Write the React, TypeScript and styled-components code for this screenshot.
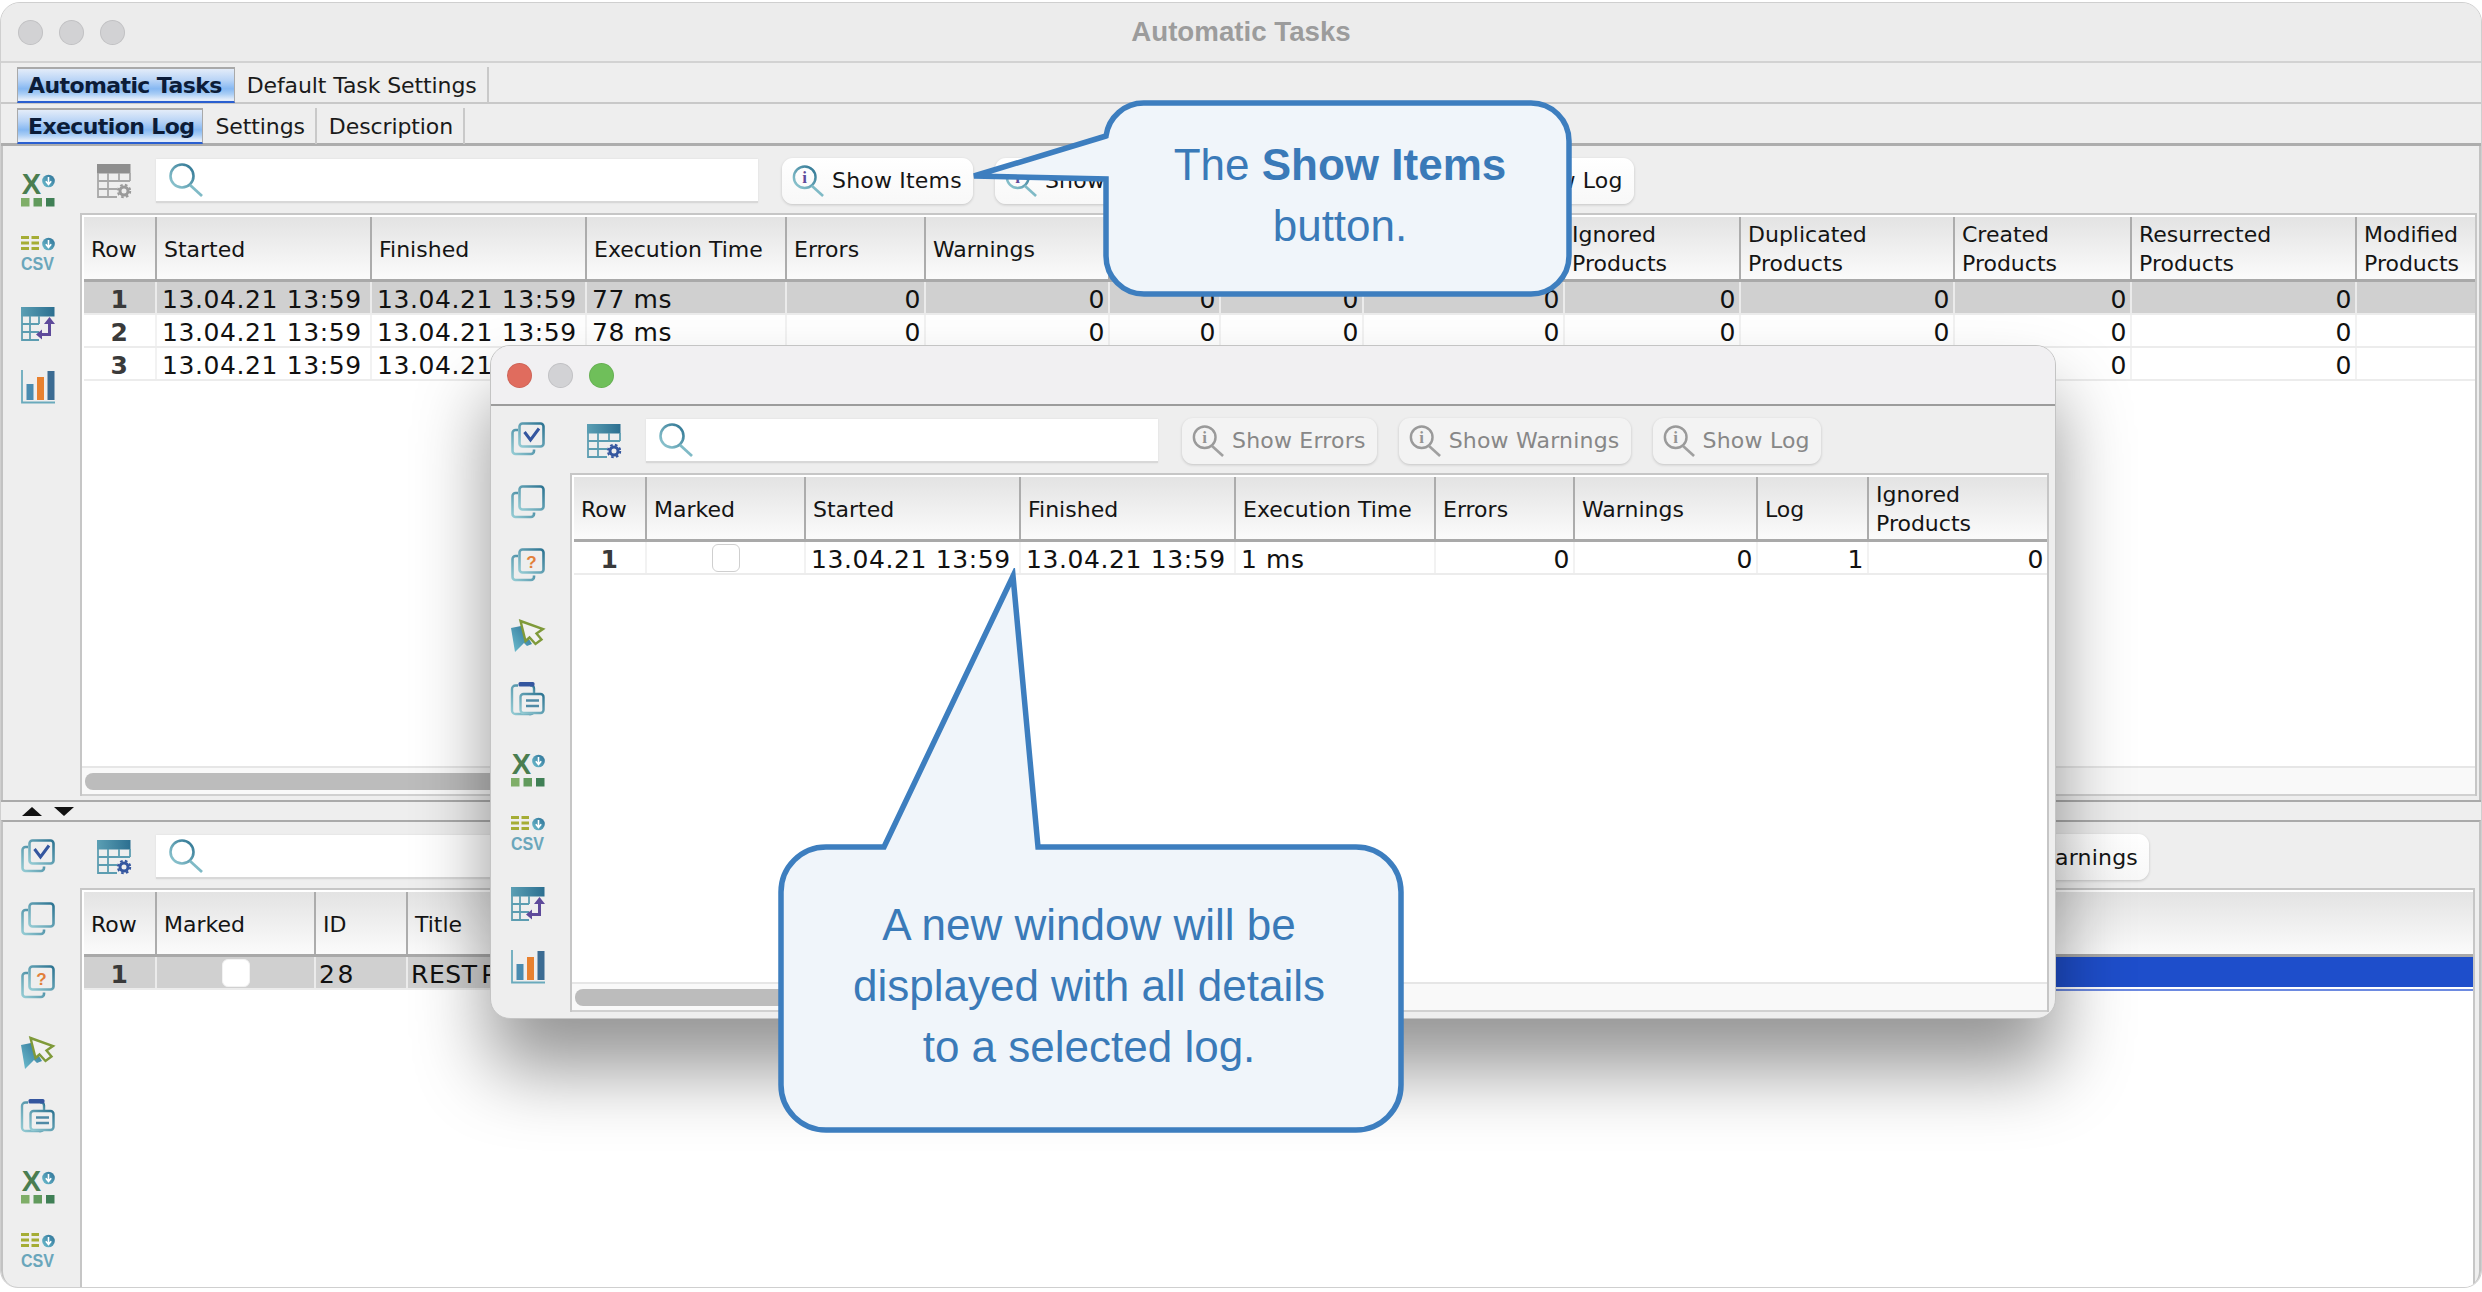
import React from 'react'
import styled, { createGlobalStyle } from 'styled-components'

const GlobalStyle = createGlobalStyle`
    html, body {
        margin: 0;
        padding: 0;
        background: #fff;
    }
    * {
        box-sizing: border-box;
    }
`

/* ---------- icons ---------- */

const IconDefs = () => (
    <svg width="0" height="0" style={{ display: 'block', height: 0 }}>
        <defs>
            <linearGradient id="teal" x1="1" y1="0" x2="0" y2="1">
                <stop offset="0" stopColor="#2c7391" />
                <stop offset="1" stopColor="#95ccd4" />
            </linearGradient>
            <linearGradient id="head" x1="0" y1="0" x2="1" y2="0">
                <stop offset="0" stopColor="#5b9fb4" />
                <stop offset="1" stopColor="#2c6f90" />
            </linearGradient>
            <linearGradient id="sky" x1="1" y1="0" x2="0" y2="1">
                <stop offset="0" stopColor="#2c6f95" />
                <stop offset="1" stopColor="#6fc0d0" />
            </linearGradient>
        </defs>
    </svg>
)

const Svg = styled.svg`
    display: block;
    flex: none;
    width: 34px;
    height: 34px;
    overflow: visible;
`

const StackFrame = () => (
    <>
        <rect x="8.5" y="1.5" width="24" height="23" rx="3" fill="none" stroke="url(#teal)" strokeWidth="2.6" />
        <path d="M7 8H4.5a3 3 0 0 0-3 3V29a3 3 0 0 0 3 3H20a3 3 0 0 0 3-3V27.5" fill="none" stroke="url(#teal)" strokeWidth="2.6" />
    </>
)

const CheckStackIcon = () => (
    <Svg viewBox="0 0 34 34">
        <StackFrame />
        <path d="M13.5 10L19.5 18L28 6.5" fill="none" stroke="#34569f" strokeWidth="3" />
    </Svg>
)

const CopyIcon = () => (
    <Svg viewBox="0 0 34 34">
        <StackFrame />
    </Svg>
)

const QuestionIcon = () => (
    <Svg viewBox="0 0 34 34">
        <StackFrame />
        <text x="20.5" y="20" textAnchor="middle" fontFamily="Liberation Sans, sans-serif" fontWeight="700" fontSize="17" fill="#e2803a">?</text>
    </Svg>
)

const CursorIcon = () => (
    <Svg viewBox="0 0 34 34">
        <path d="M0 9L10 7L21 25L16 27L13 24L4 33Z" fill="url(#sky)" />
        <path d="M9.5 2L32 10L25.5 14.5L30.5 20.5L24.5 25L18.5 18.5L14.5 22Z" fill="#f1f1f1" stroke="#7f9a3a" strokeWidth="2.4" />
    </Svg>
)

const ClipboardIcon = () => (
    <Svg viewBox="0 0 34 34">
        <path d="M7 3.5H4.5a3.5 3.5 0 0 0-3.5 3.5V28.5a3.5 3.5 0 0 0 3.5 3.5H18a5 5 0 0 0 5-1.5" fill="none" stroke="url(#teal)" strokeWidth="2.4" />
        <path d="M19 3.5H20a3 3 0 0 1 3 3V11" fill="none" stroke="url(#teal)" strokeWidth="2.4" />
        <rect x="7.5" y="0" width="16" height="4.5" rx="1.5" fill="#34569f" />
        <rect x="9.5" y="12" width="23" height="19" rx="3" fill="#f0f0f0" stroke="url(#teal)" strokeWidth="2.4" />
        <path d="M15 18.5H28M15 24H28" stroke="#4f8aa6" strokeWidth="2.6" />
    </Svg>
)

const DownBadge = () => (
    <>
        <circle cx="27.5" cy="8" r="6.3" fill="url(#sky)" />
        <path d="M27.5 4V10.5M24.8 8.3L27.5 11.5L30.2 8.3" fill="none" stroke="#fff" strokeWidth="1.6" />
    </>
)

const ExcelIcon = () => (
    <Svg viewBox="0 0 34 34">
        <text x="10.5" y="21" textAnchor="middle" fontFamily="Liberation Sans, sans-serif" fontWeight="700" fontSize="29" fill="#4a7d50">X</text>
        <DownBadge />
        <rect x="0" y="25" width="8.5" height="8.5" fill="#7fae68" />
        <rect x="12.5" y="25" width="8.5" height="8.5" fill="#619a5c" />
        <rect x="25" y="25" width="8.5" height="8.5" fill="#3f7f55" />
    </Svg>
)

const CsvIcon = () => (
    <Svg viewBox="0 0 34 34">
        <path d="M0 1.5H8M10.5 1.5H18M0 7H8M10.5 7H18M0 12.5H8M10.5 12.5H18" stroke="#a5ad35" strokeWidth="3" />
        <DownBadge />
        <text x="0" y="33.5" textLength="33" lengthAdjust="spacingAndGlyphs" fontFamily="Liberation Sans, sans-serif" fontWeight="700" fontSize="19" fill="#6aa6bb">CSV</text>
    </Svg>
)

const TableSwapIcon = () => (
    <Svg viewBox="0 0 34 34">
        <rect x="0" y="0" width="33.5" height="9.5" fill="url(#head)" />
        <path d="M1 9V33H18M1 17H18M1 25H18M9 9V33M18 9V17" fill="none" stroke="#5c9db1" strokeWidth="1.8" />
        <path d="M19 27.5H28.5V16" fill="none" stroke="#5e4a9b" strokeWidth="3" />
        <path d="M28.5 10L23 17H34ZM15 27.5L21 22.5V32.5Z" fill="#5e4a9b" />
    </Svg>
)

const BarsIcon = () => (
    <Svg viewBox="0 0 34 34">
        <path d="M1 0V32.5H34" fill="none" stroke="#6aaabc" strokeWidth="1.8" />
        <rect x="5.5" y="14" width="7" height="16" fill="#4a8bb0" />
        <rect x="16" y="7" width="7" height="23" fill="#e8812f" />
        <rect x="26.5" y="1" width="7" height="29" fill="#3b6b92" />
    </Svg>
)

const TableSettingsIcon = ({ muted }: { muted?: boolean }) => {
    const head = muted ? '#8e8e8e' : 'url(#head)'
    const line = muted ? '#a8a8a8' : '#5c9db1'
    const gear = muted ? '#9a9a9a' : '#34569f'
    return (
        <Svg viewBox="0 0 34 34">
            <rect x="0" y="0" width="33.5" height="9.5" fill={head} />
            <path d="M1 9V33H20M1 17H33M1 25H20M11 9V33M22 9V17M33 9V17" fill="none" stroke={line} strokeWidth="1.8" />
            <circle cx="27" cy="27" r="4" fill="none" stroke={gear} strokeWidth="3" />
            <circle cx="27" cy="27" r="6.2" fill="none" stroke={gear} strokeWidth="2" strokeDasharray="2.6 2.3" />
        </Svg>
    )
}

const MagnifierIcon = () => (
    <Svg viewBox="0 0 34 34">
        <circle cx="13" cy="13" r="11.5" fill="none" stroke="url(#teal)" strokeWidth="2.6" />
        <path d="M21 22L33 33" stroke="#7fbac6" strokeWidth="2.8" />
    </Svg>
)

const InfoIcon = ({ muted }: { muted?: boolean }) => (
    <Svg viewBox="0 0 34 34">
        <circle cx="13.5" cy="13" r="11.5" fill="none" stroke={muted ? '#9a9a9a' : 'url(#teal)'} strokeWidth="2.6" />
        <path d="M21 22L33 33" stroke={muted ? '#a0a0a0' : '#7fbac6'} strokeWidth="2.8" />
        <text x="13.5" y="19.5" textAnchor="middle" fontFamily="Liberation Serif, serif" fontWeight="700" fontSize="18" fill={muted ? '#949494' : '#5e4a9b'}>i</text>
    </Svg>
)

/* ---------- window chrome ---------- */

const Page = styled.div`
    position: relative;
    width: 2482px;
    height: 1292px;
    padding-top: 2px;
    overflow: hidden;
    font-family: "DejaVu Sans", sans-serif;
    color: #111;
`

const MainWindow = styled.div`
    display: flex;
    flex-direction: column;
    height: 1286px;
    background: #eeeeee;
    border: 1px solid #cfcfcf;
    border-radius: 20px 20px 18px 18px;
    overflow: hidden;
`

const TitleBar = styled.div`
    display: grid;
    grid-template-columns: 1fr auto 1fr;
    align-items: center;
    flex: none;
    height: 60px;
    padding: 0 17px;
    background: #ececec;
    border-bottom: 2px solid #d2d2d2;
`

const Lights = styled.div`
    display: flex;
    gap: 16px;
`

const Light = styled.span<{ $color: string }>`
    width: 25px;
    height: 25px;
    border-radius: 50%;
    background: ${p => p.$color};
    border: 1px solid rgba(0, 0, 0, 0.08);
`

const WindowTitle = styled.div`
    font-family: "Liberation Sans", sans-serif;
    font-weight: 700;
    font-size: 27.7px;
    color: #9c9c9c;
`

const TabRow = styled.div<{ $height: number; $line: string }>`
    display: flex;
    align-items: flex-end;
    flex: none;
    height: ${p => p.$height}px;
    padding: 0 0 0 16px;
    background: #eeeeee;
    border-bottom: ${p => p.$line};
`

const Tab = styled.div<{ $active?: boolean; $trail?: number }>`
    display: flex;
    align-items: center;
    height: 36px;
    margin-bottom: -1px;
    font-size: 22px;
    white-space: nowrap;
    ${p => p.$active ? `
        padding: 0 ${p.$trail ?? 8}px 0 10px;
        font-weight: 700;
        letter-spacing: -0.6px;
        color: #0c1c38;
        background: linear-gradient(#e3ecf9 0%, #b9d4f6 35%, #86b8f2 62%, #a9cdf5 78%, #e2ecfa 95%);
        border: 1px solid #a9a9a9;
        border-top-width: 2px;
        border-bottom: 2px solid #2a5fd0;
    ` : `
        padding: 0 10px 0 12px;
        letter-spacing: -0.1px;
        color: #1a1a1a;
        border-right: 2px solid #c9c9c9;
    `}
`

/* ---------- panes ---------- */

const UpperPane = styled.div`
    display: grid;
    grid-template-columns: 77px 1fr;
    flex: none;
    height: 654px;
    padding-bottom: 4px;
    border-left: 2px solid #c2c2c2;
    border-right: 2px solid #c2c2c2;
`

const LowerPane = styled.div`
    display: grid;
    grid-template-columns: 77px 1fr;
    flex: 1;
    min-height: 0;
    border-top: 2px solid #aaaaaa;
    border-left: 2px solid #c2c2c2;
    border-right: 2px solid #c2c2c2;
    border-radius: 0 0 16px 16px;
`

const Splitter = styled.div`
    display: flex;
    align-items: center;
    gap: 12px;
    flex: none;
    height: 20px;
    padding-left: 21px;
    border-top: 2px solid #aaaaaa;
`

const ArrowUp = styled.span`
    border-left: 10px solid transparent;
    border-right: 10px solid transparent;
    border-bottom: 9px solid #111;
`

const ArrowDown = styled.span`
    border-left: 10px solid transparent;
    border-right: 10px solid transparent;
    border-top: 9px solid #111;
`

const Rail = styled.div<{ $top: number; $left?: number }>`
    display: flex;
    flex-direction: column;
    gap: 37px;
    padding: ${p => p.$top}px 0 0 ${p => p.$left ?? 18}px;
`

const RailGroup = styled.div`
    display: flex;
    flex-direction: column;
    gap: 29px;
`

const Content = styled.div`
    display: flex;
    flex-direction: column;
    min-width: 0;
    min-height: 0;
`

const Toolbar = styled.div<{ $height: number; $top?: number }>`
    display: flex;
    align-items: center;
    flex: none;
    height: ${p => p.$height}px;
    padding: ${p => p.$top ?? 2}px 0 0 17px;
`

const SearchField = styled.div<{ $width: number; $grow?: boolean }>`
    display: flex;
    align-items: center;
    flex: ${p => (p.$grow ? '1' : 'none')};
    width: ${p => p.$width}px;
    height: 44px;
    margin: 0 24px 0 25px;
    padding-left: 13px;
    background: #fff;
    border-bottom: 2px solid #d8d8d8;
    box-shadow: 0 0 2px rgba(0, 0, 0, 0.08);
`

const ToolButton = styled.div<{ $muted?: boolean }>`
    display: flex;
    align-items: center;
    gap: 8px;
    flex: none;
    height: 46px;
    margin-right: 22px;
    padding: 0 11px 0 10px;
    font-size: 22px;
    letter-spacing: 0.2px;
    white-space: nowrap;
    color: ${p => (p.$muted ? '#878787' : '#151515')};
    background: ${p => (p.$muted ? '#f3f3f3' : 'linear-gradient(#ffffff, #f8f8f8)')};
    border-radius: 11px;
    box-shadow: 0 1px 3px rgba(0, 0, 0, 0.18);

    svg {
        width: 32px;
        height: 32px;
    }
`

const ToolbarTail = styled.div`
    flex: none;
    width: 308px;
`

/* ---------- tables ---------- */

const TableFrame = styled.div<{ $right: number }>`
    display: flex;
    flex-direction: column;
    flex: 1;
    min-height: 0;
    margin-right: ${p => p.$right}px;
    padding: 2px 0 0 2px;
    background: #fff;
    border: 2px solid #c6c6c6;
    border-bottom: none;
`

const GridRow = styled.div<{ $cols: string }>`
    display: grid;
    grid-template-columns: ${p => p.$cols};
    flex: none;
`

const HeaderRow = styled(GridRow)`
    height: 65px;
    background: linear-gradient(#e3e3e3, #fbfbfb);
    border-bottom: 3px solid #a9a9a9;
`

const HeaderCell = styled.div`
    display: flex;
    align-items: center;
    padding: 2px 4px 0 7px;
    font-size: 22px;
    line-height: 29px;
    white-space: pre-line;
    color: #141414;
    border-right: 2px solid #acacac;
    overflow: hidden;

    &:last-child {
        border-right: none;
    }
`

const DataRow = styled(GridRow)<{ $selected?: boolean }>`
    height: 33px;
    background: ${p => (p.$selected ? '#d0d0d0' : '#fff')};
    border-bottom: 2px solid #ececec;
    --sep: ${p => (p.$selected ? '#ebebeb' : '#f2f2f2')};

    &:first-of-type {
        margin-top: 1px;
    }
`

const cellPad: Record<string, string> = {
    num: '3px 3px 0 0',
    text: '3px 0 0 5px',
    row: '3px 0 0 0',
    mark: '0',
}

const DataCell = styled.div<{ $kind: string }>`
    display: flex;
    align-items: center;
    justify-content: ${p => (p.$kind === 'num' ? 'flex-end' : p.$kind === 'text' ? 'flex-start' : 'center')};
    padding: ${p => cellPad[p.$kind]};
    font-size: 25px;
    font-weight: ${p => (p.$kind === 'row' ? 700 : 400)};
    letter-spacing: 0.6px;
    white-space: pre;
    overflow: hidden;
    color: ${p => (p.$kind === 'row' ? '#3a3a3a' : '#111')};
    border-right: 2px solid var(--sep);

    &:last-child {
        border-right: none;
    }
`

const IdCell = styled(DataCell)`
    padding-left: 3px;
    letter-spacing: 2.5px;
`

const TitleCell = styled(DataCell)`
    padding-left: 3px;
    word-spacing: -5px;
`

const BlueCell = styled.div`
    background: #1e4ecb;
    height: 30px;
    box-shadow: 0 2px 0 #fff, 0 4px 0 #6d8ae0;
`

const MarkBox = styled.span<{ $plain?: boolean }>`
    width: 28px;
    height: 28px;
    background: #fff;
    border: 1px solid ${p => (p.$plain ? '#f2f2f2' : '#cfcfcf')};
    border-radius: 6px;
`

const Filler = styled.div`
    flex: 1;
    min-height: 0;
`

const ScrollTrack = styled.div`
    display: flex;
    align-items: center;
    flex: none;
    height: 30px;
    margin-left: -2px;
    padding-left: 3px;
    background: #f9f9f9;
    border-top: 2px solid #e6e6e6;
    border-bottom: 2px solid #d0d0d0;
`

const ScrollThumb = styled.div`
    width: 700px;
    height: 17px;
    background: #bcbcbc;
    border-radius: 8px;
`

/* ---------- floating window and callouts ---------- */

const PopupWindow = styled.div`
    position: absolute;
    left: 490px;
    top: 345px;
    z-index: 1;
    display: flex;
    flex-direction: column;
    width: 1566px;
    height: 674px;
    background: #eeeeee;
    border: 1px solid #c4c4c4;
    border-radius: 20px;
    box-shadow: 0 50px 75px rgba(0, 0, 0, 0.42);
    overflow: hidden;
`

const PopupTitle = styled.div`
    display: flex;
    align-items: center;
    flex: none;
    height: 60px;
    padding-left: 16px;
    background: #f1f0f2;
    border-bottom: 2px solid #9c9c9c;
`

const PopupBody = styled.div`
    display: grid;
    grid-template-columns: 79px 1fr;
    flex: 1;
    min-height: 0;
    padding-bottom: 6px;
`

const Callout = styled.div<{ $left: number; $top: number; $width: number; $height: number; $pad: string }>`
    position: absolute;
    left: ${p => p.$left}px;
    top: ${p => p.$top}px;
    z-index: 2;
    display: flex;
    align-items: center;
    justify-content: center;
    width: ${p => p.$width}px;
    height: ${p => p.$height}px;
    padding: ${p => p.$pad};
`

const CalloutShape = styled.svg`
    position: absolute;
    left: 0;
    top: 0;
    width: 100%;
    height: 100%;
`

const CalloutText = styled.div`
    position: relative;
    font-family: "Liberation Sans", sans-serif;
    font-size: 44px;
    line-height: 61px;
    text-align: center;
    color: #3a7ab8;

    b {
        font-weight: 700;
    }
`

/* ---------- data ---------- */

const mainCols = '73px 215px 215px 200px 139px 184px 111px 143px 201px 176px 214px 177px 225px 1fr'
const mainHead = ['Row', 'Started', 'Finished', 'Execution Time', 'Errors', 'Warnings', '', '', '', 'Ignored\nProducts', 'Duplicated\nProducts', 'Created\nProducts', 'Resurrected\nProducts', 'Modified\nProducts']
const mainKinds = ['row', 'text', 'text', 'text', 'num', 'num', 'num', 'num', 'num', 'num', 'num', 'num', 'num', 'num']
const zeros = ['0', '0', '0', '0', '0', '0', '0', '0', '0', '']
const mainRows = [
    { selected: true, cells: ['1', '13.04.21 13:59', '13.04.21 13:59', '77 ms', ...zeros] },
    { selected: false, cells: ['2', '13.04.21 13:59', '13.04.21 13:59', '78 ms', ...zeros] },
    { selected: false, cells: ['3', '13.04.21 13:59', '13.04.21 13:59', '77 ms', ...zeros] },
]

const popupCols = '73px 159px 215px 215px 200px 139px 183px 111px 1fr'
const popupHead = ['Row', 'Marked', 'Started', 'Finished', 'Execution Time', 'Errors', 'Warnings', 'Log', 'Ignored\nProducts']

const lowerCols = '73px 159px 92px 1000px 1fr'
const lowerHead = ['Row', 'Marked', 'ID', 'Title', '']

const RailIcons = ({ full }: { full?: boolean }) => (
    <>
        {full && (
            <>
                <RailGroup>
                    <CheckStackIcon />
                    <CopyIcon />
                    <QuestionIcon />
                </RailGroup>
                <RailGroup>
                    <CursorIcon />
                    <ClipboardIcon />
                </RailGroup>
            </>
        )}
        <RailGroup>
            <ExcelIcon />
            <CsvIcon />
        </RailGroup>
        <RailGroup>
            <TableSwapIcon />
            <BarsIcon />
        </RailGroup>
    </>
)

const Head = ({ cols, labels }: { cols: string; labels: string[] }) => (
    <HeaderRow $cols={cols}>
        {labels.map((label, i) => (
            <HeaderCell key={i}>{label}</HeaderCell>
        ))}
    </HeaderRow>
)

const App = () => (
    <Page>
        <GlobalStyle />
        <IconDefs />

        <MainWindow>
            <TitleBar>
                <Lights>
                    <Light $color="#d2d2d4" />
                    <Light $color="#d2d2d4" />
                    <Light $color="#d2d2d4" />
                </Lights>
                <WindowTitle>Automatic Tasks</WindowTitle>
            </TitleBar>

            <TabRow $height={41} $line="2px solid #c8c8c8">
                <Tab $active $trail={12}>Automatic Tasks</Tab>
                <Tab>Default Task Settings</Tab>
            </TabRow>
            <TabRow $height={42} $line="3px solid #adadad">
                <Tab $active>Execution Log</Tab>
                <Tab>Settings</Tab>
                <Tab>Description</Tab>
            </TabRow>

            <UpperPane>
                <Rail $top={27}>
                    <RailIcons />
                </Rail>
                <Content>
                    <Toolbar $height={67}>
                        <TableSettingsIcon muted />
                        <SearchField $width={602}>
                            <MagnifierIcon />
                        </SearchField>
                        <ToolButton><InfoIcon />Show Items</ToolButton>
                        <ToolButton><InfoIcon />Show Errors</ToolButton>
                        <ToolButton><InfoIcon />Show Warnings</ToolButton>
                        <ToolButton><InfoIcon />Show Log</ToolButton>
                    </Toolbar>
                    <TableFrame $right={2}>
                        <Head cols={mainCols} labels={mainHead} />
                        {mainRows.map((row, r) => (
                            <DataRow key={r} $cols={mainCols} $selected={row.selected}>
                                {row.cells.map((cell, c) => (
                                    <DataCell key={c} $kind={mainKinds[c]}>{cell}</DataCell>
                                ))}
                            </DataRow>
                        ))}
                        <Filler />
                        <ScrollTrack>
                            <ScrollThumb />
                        </ScrollTrack>
                    </TableFrame>
                </Content>
            </UpperPane>

            <Splitter>
                <ArrowUp />
                <ArrowDown />
            </Splitter>

            <LowerPane>
                <Rail $top={17}>
                    <RailIcons full />
                </Rail>
                <Content>
                    <Toolbar $height={66} $top={4}>
                        <TableSettingsIcon />
                        <SearchField $width={1000} $grow>
                            <MagnifierIcon />
                        </SearchField>
                        <ToolButton><InfoIcon />Show Warnings</ToolButton>
                        <ToolbarTail />
                    </Toolbar>
                    <TableFrame $right={4}>
                        <Head cols={lowerCols} labels={lowerHead} />
                        <DataRow $cols={lowerCols} $selected>
                            <DataCell $kind="row">1</DataCell>
                            <DataCell $kind="mark"><MarkBox $plain /></DataCell>
                            <IdCell $kind="text">28</IdCell>
                            <TitleCell $kind="text">REST P</TitleCell>
                            <BlueCell />
                        </DataRow>
                        <Filler />
                    </TableFrame>
                </Content>
            </LowerPane>
        </MainWindow>

        <PopupWindow>
            <PopupTitle>
                <Lights>
                    <Light $color="#e06c5e" />
                    <Light $color="#d2d2d5" />
                    <Light $color="#6fbf5a" />
                </Lights>
            </PopupTitle>
            <PopupBody>
                <Rail $top={16} $left={20}>
                    <RailIcons full />
                </Rail>
                <Content>
                    <Toolbar $height={67}>
                        <TableSettingsIcon />
                        <SearchField $width={512}>
                            <MagnifierIcon />
                        </SearchField>
                        <ToolButton $muted><InfoIcon muted />Show Errors</ToolButton>
                        <ToolButton $muted><InfoIcon muted />Show Warnings</ToolButton>
                        <ToolButton $muted><InfoIcon muted />Show Log</ToolButton>
                    </Toolbar>
                    <TableFrame $right={6}>
                        <Head cols={popupCols} labels={popupHead} />
                        <DataRow $cols={popupCols}>
                            <DataCell $kind="row">1</DataCell>
                            <DataCell $kind="mark"><MarkBox /></DataCell>
                            <DataCell $kind="text">13.04.21 13:59</DataCell>
                            <DataCell $kind="text">13.04.21 13:59</DataCell>
                            <DataCell $kind="text">1 ms</DataCell>
                            <DataCell $kind="num">0</DataCell>
                            <DataCell $kind="num">0</DataCell>
                            <DataCell $kind="num">1</DataCell>
                            <DataCell $kind="num">0</DataCell>
                        </DataRow>
                        <Filler />
                        <ScrollTrack>
                            <ScrollThumb />
                        </ScrollTrack>
                    </TableFrame>
                </Content>
            </PopupBody>
        </PopupWindow>

        <Callout $left={970} $top={98} $width={604} $height={202} $pad="0 0 8px 136px">
            <CalloutShape viewBox="0 0 604 202">
                <path
                    d="M136 38L4 78L136 81V158A38 38 0 0 0 174 196H561A38 38 0 0 0 599 158V43A38 38 0 0 0 561 5H174A38 38 0 0 0 136 38Z"
                    fill="#f0f5fa"
                    stroke="#3d7ebf"
                    strokeWidth="5.5"
                />
            </CalloutShape>
            <CalloutText>The <b>Show Items</b><br />button.</CalloutText>
        </Callout>

        <Callout $left={776} $top={568} $width={630} $height={567} $pad="280px 4px 12px 0">
            <CalloutShape viewBox="0 0 630 567">
                <path
                    d="M108 279L237 8L262 279H580A45 45 0 0 1 625 324V517A45 45 0 0 1 580 562H50A45 45 0 0 1 5 517V324A45 45 0 0 1 50 279Z"
                    fill="#f0f5fa"
                    stroke="#3d7ebf"
                    strokeWidth="5.5"
                />
            </CalloutShape>
            <CalloutText>A new window will be<br />displayed with all details<br />to a selected log.</CalloutText>
        </Callout>
    </Page>
)

export default App
